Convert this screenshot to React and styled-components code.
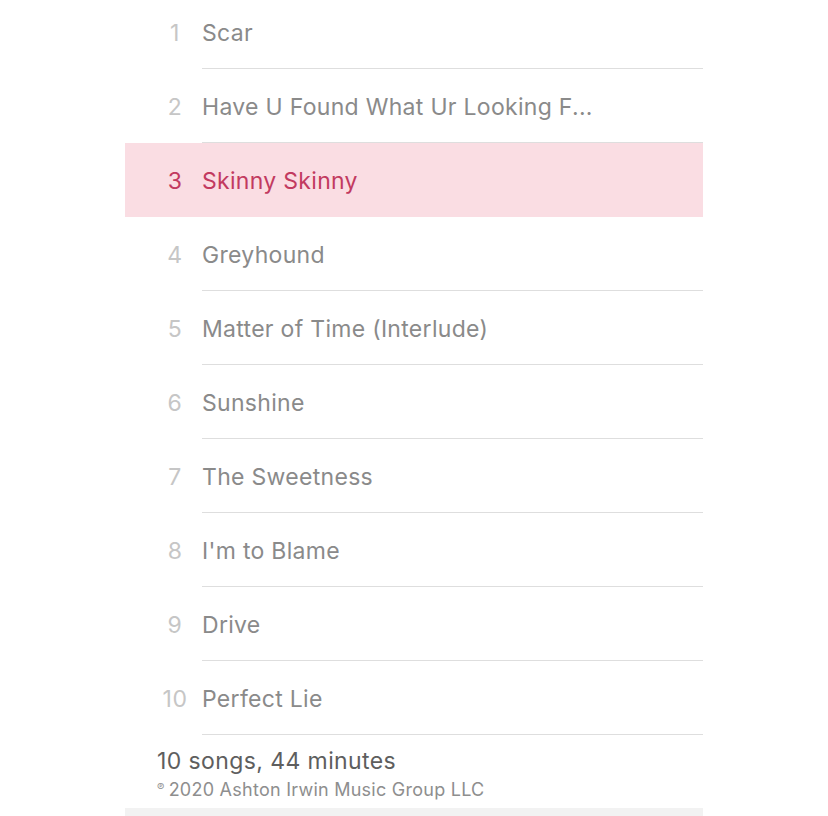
import styled, { createGlobalStyle } from 'styled-components';

const GlobalStyle = createGlobalStyle`
  body {
    margin: 0;
    background: #fff;
    font-family: Inter, "Noto Sans", "Liberation Sans", sans-serif;
  }
`

const Page = styled.div`
  width: 828px;
  height: 816px;
  overflow: hidden;
`

const List = styled.div`
  width: 578px;
  margin: -5px 0 0 125px;
`

const Row = styled.div`
  display: grid;
  grid-template-columns: 77px 1fr;
  height: 74px;
  background: ${p => (p.active ? '#fadde3' : 'transparent')};
`

const Num = styled.div`
  display: flex;
  align-items: center;
  justify-content: center;
  padding: 2px 0 0 23px;
  font-size: 23px;
  letter-spacing: 0.5px;
  color: ${p => (p.active ? '#c23a60' : '#c6c6c6')};
`

const Title = styled.div`
  display: flex;
  align-items: center;
  padding-top: 2px;
  font-size: 23px;
  letter-spacing: 0.3px;
  color: ${p => (p.active ? '#c23a60' : '#8a8a8a')};
  border-bottom: 1px solid ${p => (p.active ? 'transparent' : '#dedede')};
  white-space: nowrap;
`

const Footer = styled.div`
  padding: 11px 0 0 32px;
`

const Summary = styled.div`
  font-size: 23px;
  letter-spacing: 0.4px;
  color: #5e5e5e;
  line-height: 30px;
`

const Copy = styled.div`
  font-size: 18px;
  letter-spacing: 0.25px;
  color: #8e8e8e;
  line-height: 22px;
  sup {
    font-size: 11px;
    vertical-align: 5px;
    margin-right: 4px;
  }
`

const Bar = styled.div`
  height: 10px;
  margin-top: 7px;
  background: #f2f2f2;
`

const songs = [
  'Scar',
  'Have U Found What Ur Looking F...',
  'Skinny Skinny',
  'Greyhound',
  'Matter of Time (Interlude)',
  'Sunshine',
  'The Sweetness',
  "I'm to Blame",
  'Drive',
  'Perfect Lie',
]

const App = () => {
  return (
    <Page>
      <GlobalStyle />
      <List>
        {songs.map((s, i) => {
          const active = i === 2
          return (
            <Row key={s} active={active}>
              <Num active={active}>{i + 1}</Num>
              <Title active={active}>{s}</Title>
            </Row>
          )
        })}
        <Footer>
          <Summary>10 songs, 44 minutes</Summary>
          <Copy><sup>℗</sup>2020 Ashton Irwin Music Group LLC</Copy>
        </Footer>
        <Bar />
      </List>
    </Page>
  )
}
export default App
